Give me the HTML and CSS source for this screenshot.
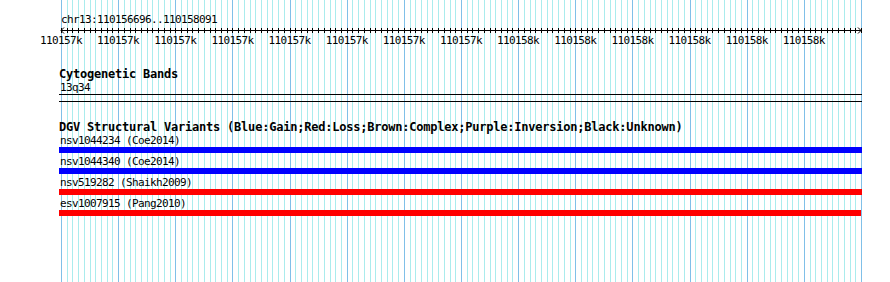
FILE: index.html
```html
<!DOCTYPE html>
<html>

<head>
    <meta charset="utf-8">
    <title>DGV track</title>
    <meta name="viewport" content="width=device-width, initial-scale=1">
    <link rel="stylesheet" href="styles.css">
</head>

<body>
    <section class="panel">
        <svg class="grid" width="890" height="282" shape-rendering="crispEdges">
            <path class="grid-minor" d=""></path>
            <path class="grid-major" d=""></path>
        </svg>
        <div class="content">
            <div class="small ruler-title">chr13:110156696..110158091</div>
            <svg class="ruler" width="890" height="8" shape-rendering="crispEdges">
                <path class="ruler-ticks" d=""></path>
                <path d="M61 4.5H861"></path>
                <path d="M64 1.5L61 4.5L64 7.5M858 1.5L861 4.5L858 7.5" shape-rendering="auto"></path>
            </svg>
            <div class="small ruler-labels">
                <span>110157k</span>
                <span>110157k</span>
                <span>110157k</span>
                <span>110157k</span>
                <span>110157k</span>
                <span>110157k</span>
                <span>110157k</span>
                <span>110157k</span>
                <span>110158k</span>
                <span>110158k</span>
                <span>110158k</span>
                <span>110158k</span>
                <span>110158k</span>
                <span>110158k</span>
            </div>

            <div class="track cyto">
                <div class="bold track-title">Cytogenetic Bands</div>
                <div class="small feature-label">13q34</div>
                <div class="band"></div>
            </div>

            <div class="track dgv">
                <div class="bold track-title">DGV Structural Variants (Blue:Gain;Red:Loss;Brown:Complex;Purple:Inversion;Black:Unknown)</div>
                <div class="feature">
                    <div class="small feature-label">nsv1044234 (Coe2014)</div>
                    <div class="bar gain"></div>
                </div>
                <div class="feature">
                    <div class="small feature-label">nsv1044340 (Coe2014)</div>
                    <div class="bar gain"></div>
                </div>
                <div class="feature">
                    <div class="small feature-label">nsv519282 (Shaikh2009)</div>
                    <div class="bar loss"></div>
                </div>
                <div class="feature">
                    <div class="small feature-label">esv1007915 (Pang2010)</div>
                    <div class="bar loss short"></div>
                </div>
            </div>
        </div>
    </section>
    <script>
        // 110156696..110158091 drawn over 800px, a line every 10 bp
        let minor = '';
        let major = '';
        let ticks = '';
        for (let i = 0; i <= 140; i++) {
            let x = Math.round(61 + i * 800 / 140) + 0.5;
            if (i % 10 === 0) {
                major += `M${x} 0V282`;
            } else {
                minor += `M${x} 0V282`;
            }
            ticks += `M${x} 2V7`;
        }
        document.querySelector('.grid-minor').setAttribute('d', minor);
        document.querySelector('.grid-major').setAttribute('d', major);
        document.querySelector('.ruler-ticks').setAttribute('d', ticks);
    </script>
</body>

</html>
```

FILE: styles.css
```css
body {
    margin: 0;
    padding: 0;
    background-color: #fff;
    color: #000;
    font-family: "DejaVu Sans Mono", "Liberation Mono", monospace;
}

.panel {
    position: relative;
    width: 890px;
    height: 282px;
    overflow: hidden;
}

.grid {
    position: absolute;
    top: 0;
    left: 0;
}

.grid-minor {
    stroke: #aaeced;
    stroke-width: 1;
}

.grid-major {
    stroke: #80c0e8;
    stroke-width: 1;
}

.content {
    position: relative;
    padding-top: 13px;
}

.small {
    font-size: 11px;
    letter-spacing: -0.62px;
    line-height: 13px;
    white-space: pre;
}

.bold {
    font-size: 12px;
    font-weight: bold;
    letter-spacing: -0.22px;
    line-height: 13px;
    white-space: pre;
}

.ruler-title {
    padding-left: 61px;
}

.ruler {
    display: block;
    stroke: #000;
    fill: none;
}

.ruler-labels {
    display: flex;
    padding-left: 32.43px;
}

.ruler-labels span {
    width: 57.143px;
    flex: none;
    text-align: center;
}

.track {
    padding-left: 59px;
}

.feature-label {
    padding-left: 1px;
}

.cyto {
    margin-top: 21px;
}

.band {
    width: 803px;
    height: 6px;
    margin-top: 0;
    border-top: 1px solid #000;
    border-bottom: 1px solid #000;
}

.dgv {
    margin-top: 19px;
}

.feature {
    margin-bottom: 2px;
}

.bar {
    width: 803px;
    height: 6px;
}

.bar.short {
    width: 802px;
}

.gain {
    background-color: #0000ff;
}

.loss {
    background-color: #ff0000;
}
```
